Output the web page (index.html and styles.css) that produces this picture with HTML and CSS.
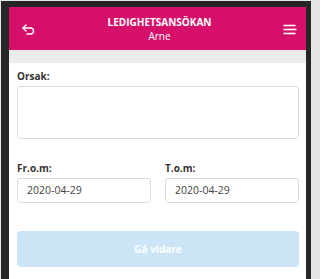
FILE: index.html
```html
<!DOCTYPE html>
<html lang="sv">
<head>
<meta charset="utf-8">
<title>Ledighetsansökan</title>
<link rel="stylesheet" href="styles.css">
</head>
<body>
<div class="phone">
  <header class="topbar">
    <button class="icon-btn" aria-label="Tillbaka">
      <svg width="14" height="12" viewBox="0 0 14 12" fill="none" stroke="#fff" stroke-width="1.4" stroke-linecap="round" stroke-linejoin="round">
        <path d="M4 1 L1 4 L4 7"/>
        <path d="M1 4 H8.5 A3 3 0 0 1 8.5 10 H5"/>
      </svg>
    </button>
    <div class="title">
      <div class="title-main">LEDIGHETSANSÖKAN</div>
      <div class="title-sub">Arne</div>
    </div>
    <button class="icon-btn" aria-label="Meny">
      <svg width="14" height="11" viewBox="0 0 14 11" fill="none" stroke="#fff" stroke-width="1.6">
        <path d="M0.5 1.5 H12.5"/>
        <path d="M0.5 5.5 H13.5"/>
        <path d="M0.5 9.5 H12.5"/>
      </svg>
    </button>
  </header>
  <div class="band"></div>
  <main class="content">
    <label class="label">Orsak:</label>
    <div class="textarea"></div>
    <div class="dates">
      <div class="field">
        <label class="label">Fr.o.m:</label>
        <div class="input">2020-04-29</div>
      </div>
      <div class="field">
        <label class="label">T.o.m:</label>
        <div class="input">2020-04-29</div>
      </div>
    </div>
    <button class="submit">Gå vidare</button>
  </main>
</div>
</body>
</html>
```

FILE: styles.css
```css
html, body {
  margin: 0;
  padding: 0;
}
body {
  background: #e6e6e6;
  font-family: "Open Sans", "DejaVu Sans", sans-serif;
  width: 313px;
  height: 279px;
  overflow: hidden;
}
.phone {
  margin: 1px 2px 0 1px;
  border: solid #262626;
  border-width: 6px 5px 0 8px;
  background: #fff;
  height: 278px;
  box-sizing: border-box;
}
.topbar {
  background: #d6106a;
  height: 43px;
  display: flex;
  align-items: center;
  justify-content: space-between;
  padding: 0 8px 0 12px;
  color: #fff;
}
.icon-btn {
  background: none;
  border: 0;
  padding: 0;
  width: 16px;
  height: 16px;
  display: flex;
  align-items: center;
  justify-content: center;
  margin-top: 2px;
}
.title {
  text-align: center;
  line-height: 13px;
  padding-top: 1px;
}
.title-main {
  font-weight: 700;
  font-size: 10px;
}
.title-sub {
  font-size: 10px;
  margin-top: 1px;
}
.band {
  background: #ececec;
  height: 13px;
}
.content {
  padding: 6px 7px 0 8px;
  display: flex;
  flex-direction: column;
}
.label {
  display: block;
  font-weight: 700;
  font-size: 10px;
  color: #333;
  line-height: 14px;
}
.textarea {
  margin-top: 3px;
  height: 53px;
  box-sizing: border-box;
  border: 1px solid #dcdcdc;
  border-radius: 3px;
}
.dates {
  display: grid;
  grid-template-columns: 1fr 1fr;
  column-gap: 14px;
  margin-top: 22px;
}
.field .input {
  margin-top: 3px;
  height: 25px;
  box-sizing: border-box;
  border: 1px solid #dcdcdc;
  border-radius: 3px;
  font-size: 10.5px;
  color: #444;
  line-height: 23px;
  padding-left: 9px;
}
.submit {
  margin-top: 28px;
  height: 36px;
  border: 0;
  border-radius: 4px;
  background: #cce5f6;
  color: #fff;
  font-family: inherit;
  font-weight: 700;
  font-size: 10px;
}
```
